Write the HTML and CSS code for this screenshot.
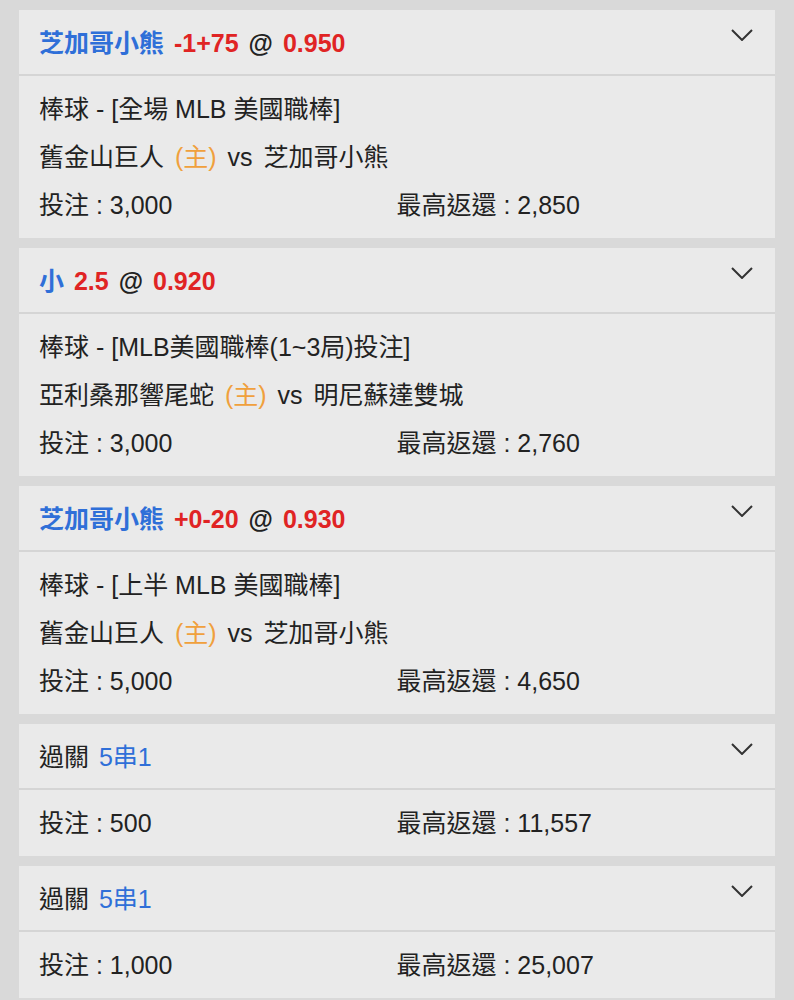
FILE: index.html
```html
<!DOCTYPE html>
<html lang="zh-Hant">
<head>
<meta charset="utf-8">
<link rel="stylesheet" href="styles.css">
</head>
<body>
<div class="list">
  <section class="card">
    <div class="head">
      <div class="title"><span class="blue">芝加哥小熊</span> <span class="red">-1+75</span> @ <span class="red">0.950</span></div>
      <svg class="chev" width="22" height="12" viewBox="0 0 22 12"><polyline points="1,1 11,11 21,1" fill="none" stroke="#333" stroke-width="2"/></svg>
    </div>
    <div class="body">
      <div class="row">棒球 - [全場 MLB 美國職棒]</div>
      <div class="row teams">舊金山巨人 <span class="orange">(主)</span> vs 芝加哥小熊</div>
      <div class="row pair"><span>投注 : 3,000</span><span>最高返還 : 2,850</span></div>
    </div>
  </section>
  <section class="card">
    <div class="head">
      <div class="title"><span class="blue">小</span> <span class="red">2.5</span> @ <span class="red">0.920</span></div>
      <svg class="chev" width="22" height="12" viewBox="0 0 22 12"><polyline points="1,1 11,11 21,1" fill="none" stroke="#333" stroke-width="2"/></svg>
    </div>
    <div class="body">
      <div class="row">棒球 - [MLB美國職棒(1~3局)投注]</div>
      <div class="row teams">亞利桑那響尾蛇 <span class="orange">(主)</span> vs 明尼蘇達雙城</div>
      <div class="row pair"><span>投注 : 3,000</span><span>最高返還 : 2,760</span></div>
    </div>
  </section>
  <section class="card">
    <div class="head">
      <div class="title"><span class="blue">芝加哥小熊</span> <span class="red">+0-20</span> @ <span class="red">0.930</span></div>
      <svg class="chev" width="22" height="12" viewBox="0 0 22 12"><polyline points="1,1 11,11 21,1" fill="none" stroke="#333" stroke-width="2"/></svg>
    </div>
    <div class="body">
      <div class="row">棒球 - [上半 MLB 美國職棒]</div>
      <div class="row teams">舊金山巨人 <span class="orange">(主)</span> vs 芝加哥小熊</div>
      <div class="row pair"><span>投注 : 5,000</span><span>最高返還 : 4,650</span></div>
    </div>
  </section>
  <section class="card">
    <div class="head">
      <div class="title plain">過關 <span class="blue">5串1</span></div>
      <svg class="chev" width="22" height="12" viewBox="0 0 22 12"><polyline points="1,1 11,11 21,1" fill="none" stroke="#333" stroke-width="2"/></svg>
    </div>
    <div class="body">
      <div class="row pair"><span>投注 : 500</span><span>最高返還 : 11,557</span></div>
    </div>
  </section>
  <section class="card">
    <div class="head">
      <div class="title plain">過關 <span class="blue">5串1</span></div>
      <svg class="chev" width="22" height="12" viewBox="0 0 22 12"><polyline points="1,1 11,11 21,1" fill="none" stroke="#333" stroke-width="2"/></svg>
    </div>
    <div class="body">
      <div class="row pair"><span>投注 : 1,000</span><span>最高返還 : 25,007</span></div>
    </div>
  </section>
</div>
</body>
</html>
```

FILE: styles.css
```css
html, body {
  margin: 0;
  padding: 0;
  background: #d9d9d9;
}
body {
  font-family: "Liberation Sans", Arial, "Noto Sans CJK TC", sans-serif;
  font-size: 25px;
  color: #222;
}
.list {
  display: flex;
  flex-direction: column;
  gap: 10px;
  padding: 10px 19px 2px 19px;
}
.card {
  background: #eaeaea;
}
.head {
  box-sizing: border-box;
  height: 66px;
  display: flex;
  justify-content: space-between;
  align-items: center;
  padding: 0 22px 3px 20px;
  border-bottom: 2px solid #d5d5d5;
}
.title {
  font-weight: bold;
  white-space: pre;
  word-spacing: 3px;
}
.title.plain {
  font-weight: normal;
  word-spacing: 3px;
}
.chev {
  align-self: flex-start;
  margin-top: 19px;
}
.body {
  padding: 9px 21px 9px 20px;
}
.row {
  line-height: 48px;
  height: 48px;
  white-space: pre;
}
.teams {
  word-spacing: 4px;
}
.pair {
  display: grid;
  grid-template-columns: 1fr 1fr;
}
.blue { color: #2f6fd8; }
.red { color: #e02424; }
.orange { color: #f0a03c; }
```
